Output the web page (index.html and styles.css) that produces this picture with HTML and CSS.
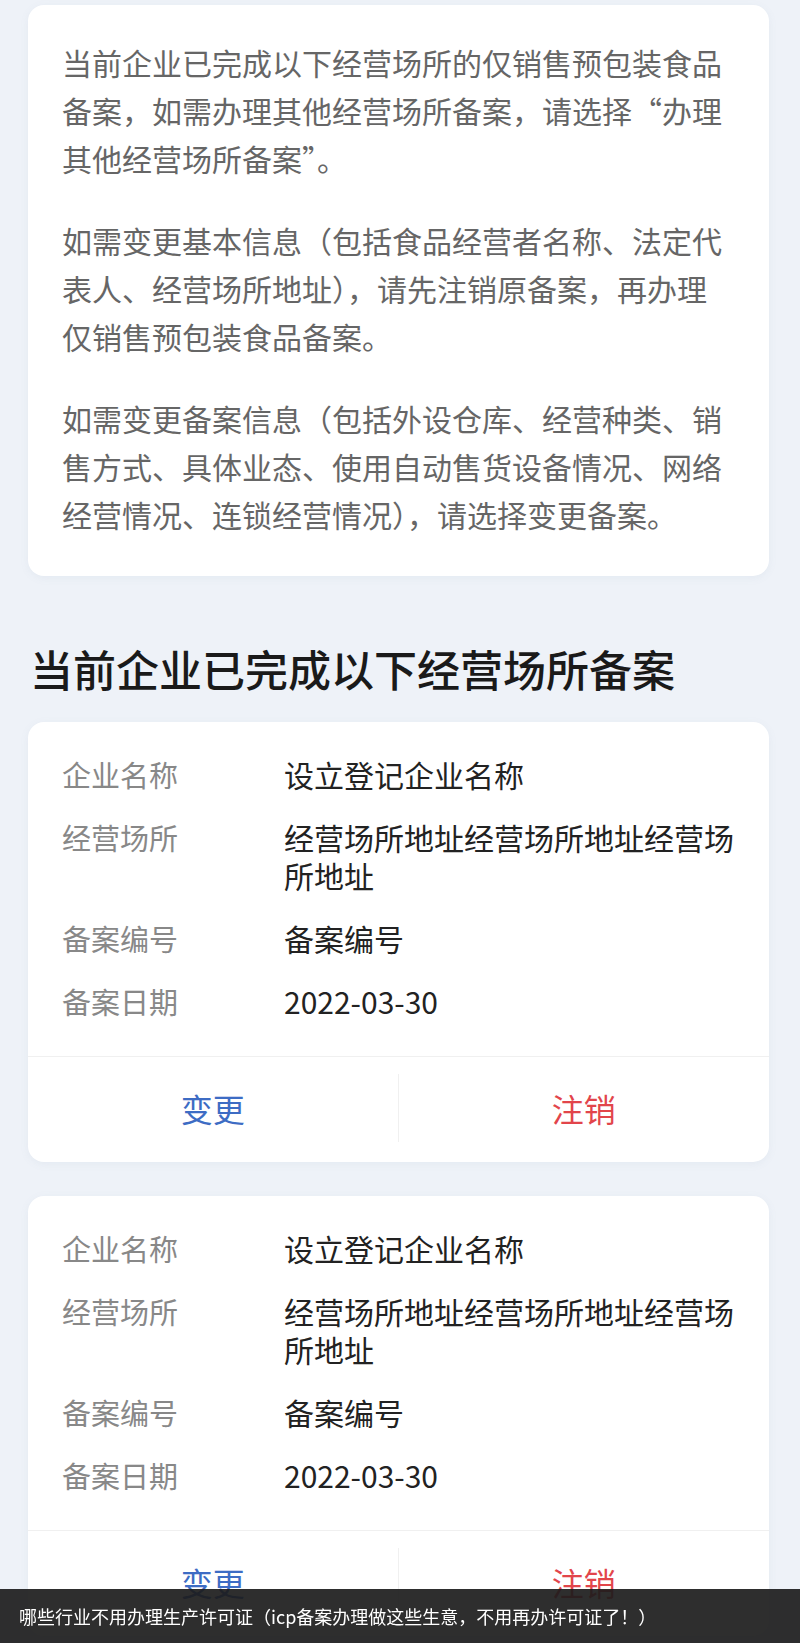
FILE: index.html
```html
<!DOCTYPE html>
<html lang="zh-CN">
<head>
<meta charset="utf-8">
<title>备案</title>
<link rel="stylesheet" href="styles.css">
</head>
<body>
<main class="page">
  <section class="card notice">
    <p>当前企业已完成以下经营场所的仅销售预包装食品备案，如需办理其他经营场所备案，请选择“办理其他经营场所备案”。</p>
    <p>如需变更基本信息（包括食品经营者名称、法定代表人、经营场所地址），请先注销原备案，再办理仅销售预包装食品备案。</p>
    <p>如需变更备案信息（包括外设仓库、经营种类、销售方式、具体业态、使用自动售货设备情况、网络经营情况、连锁经营情况），请选择变更备案。</p>
  </section>

  <h2 class="title">当前企业已完成以下经营场所备案</h2>

  <section class="card record">
    <div class="rows">
      <div class="row"><span class="label">企业名称</span><span class="value">设立登记企业名称</span></div>
      <div class="row"><span class="label">经营场所</span><span class="value">经营场所地址经营场所地址经营场所地址</span></div>
      <div class="row"><span class="label">备案编号</span><span class="value">备案编号</span></div>
      <div class="row"><span class="label">备案日期</span><span class="value">2022-03-30</span></div>
    </div>
    <div class="actions">
      <button class="btn change">变更</button>
      <button class="btn cancel">注销</button>
    </div>
  </section>

  <section class="card record">
    <div class="rows">
      <div class="row"><span class="label">企业名称</span><span class="value">设立登记企业名称</span></div>
      <div class="row"><span class="label">经营场所</span><span class="value">经营场所地址经营场所地址经营场所地址</span></div>
      <div class="row"><span class="label">备案编号</span><span class="value">备案编号</span></div>
      <div class="row"><span class="label">备案日期</span><span class="value">2022-03-30</span></div>
    </div>
    <div class="actions">
      <button class="btn change">变更</button>
      <button class="btn cancel">注销</button>
    </div>
  </section>
</main>

<div class="caption">哪些行业不用办理生产许可证（icp备案办理做这些生意，不用再办许可证了！）</div>
</body>
</html>
```

FILE: styles.css
```css
html, body {
  margin: 0;
  padding: 0;
}

body {
  background: #eef2f8;
  font-family: "Noto Sans CJK SC", "Noto Sans", sans-serif;
  color: #222;
}

.page {
  padding: 5px 31px 40px 28px;
  display: flex;
  flex-direction: column;
}

.card {
  background: #ffffff;
  border-radius: 16px;
  box-shadow: 0 2px 8px rgba(120, 140, 170, 0.08);
}

.notice {
  padding: 33px 45px 38px 34px;
}

.notice p {
  margin: 0;
  font-size: 30px;
  line-height: 48px;
  color: #666666;
}

.notice p + p {
  margin-top: 34px;
}

.title {
  margin: 62px 0 24px 2px;
  font-size: 43px;
  line-height: 60px;
  font-weight: 500;
  color: #1a1a1a;
}

.record + .record {
  margin-top: 34px;
}

.rows {
  padding: 33px 30px 36px 34px;
  display: flex;
  flex-direction: column;
  gap: 25px;
  border-bottom: 1px solid #f0f0f0;
}

.row {
  display: flex;
  align-items: flex-start;
}

.label {
  flex: 0 0 222px;
  font-size: 29px;
  line-height: 38px;
  color: #888888;
}

.value {
  flex: 1;
  font-size: 30px;
  line-height: 38px;
  color: #222222;
}

.actions {
  display: grid;
  grid-template-columns: 1fr 1fr;
  height: 105px;
  align-items: center;
  padding-bottom: 4px;
  box-sizing: border-box;
}

.btn {
  border: 0;
  background: transparent;
  font-family: inherit;
  font-size: 32px;
  line-height: 68px;
  padding: 0;
}

.change {
  color: #3d6cc4;
  border-right: 1px solid #f0f0f0;
}

.cancel {
  color: #e2454b;
}

.caption {
  position: fixed;
  left: 0;
  right: 0;
  bottom: 0;
  height: 54px;
  background: rgba(28, 28, 28, 0.92);
  color: #ffffff;
  font-size: 18px;
  line-height: 54px;
  padding-left: 19px;
  white-space: nowrap;
}
```
